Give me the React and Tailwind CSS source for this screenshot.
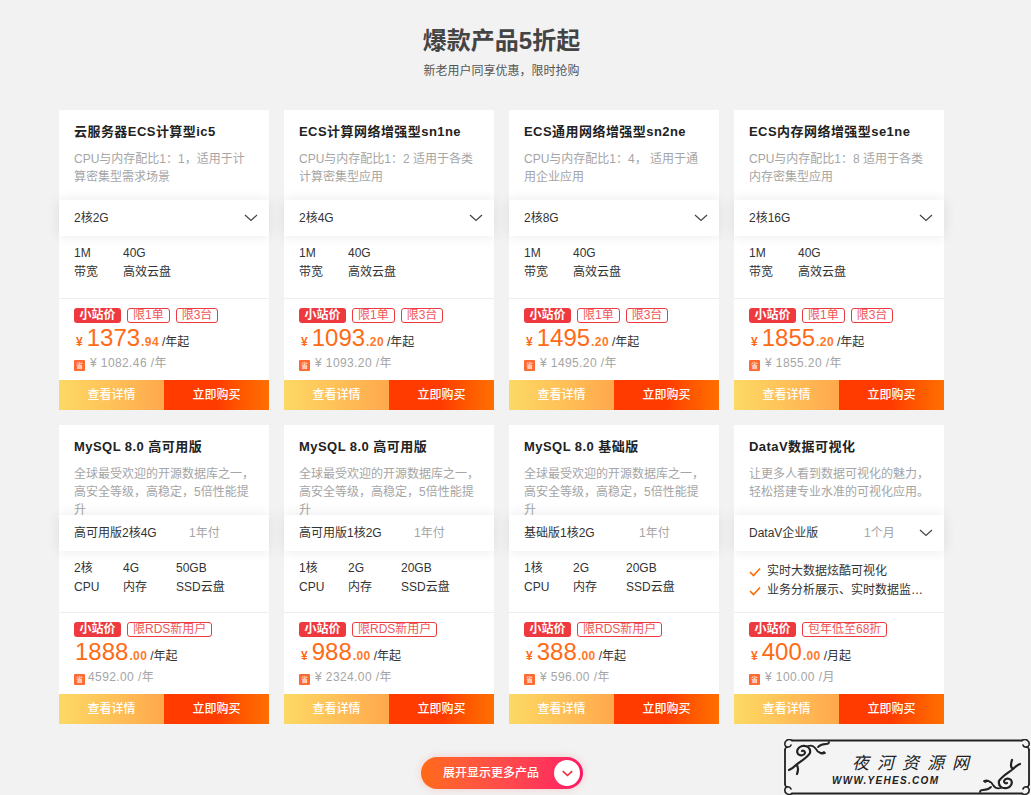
const font = { fontFamily: '"Liberation Sans","Noto Sans CJK SC",sans-serif' };

const Chevron = ({ className }) => (
  <svg viewBox="0 0 14 8" className={className} fill="none" stroke="currentColor" strokeWidth="1.2">
    <path d="M1 1l6 5.5L13 1" />
  </svg>
);

const Check = () => (
  <svg viewBox="0 0 12 10" className="w-[12px] h-[10px] shrink-0 text-[#ff6a00]" fill="none" stroke="currentColor" strokeWidth="1.6">
    <path d="M1 5l3.5 3.5L11 1.5" />
  </svg>
);

const cards = [
  { t: "云服务器ECS计算型ic5", d: "CPU与内存配比1：1，适用于计算密集型需求场景", sel: "2核2G", chev: true, specs: [["1M", "带宽"], ["40G", "高效云盘"]], tags: ["限1单", "限3台"], yen: true, p: "1373", c: ".94", u: "/年起", s: "¥ 1082.46 /年" },
  { t: "ECS计算网络增强型sn1ne", d: "CPU与内存配比1：2 适用于各类计算密集型应用", sel: "2核4G", chev: true, specs: [["1M", "带宽"], ["40G", "高效云盘"]], tags: ["限1单", "限3台"], yen: true, p: "1093", c: ".20", u: "/年起", s: "¥ 1093.20 /年" },
  { t: "ECS通用网络增强型sn2ne", d: "CPU与内存配比1：4， 适用于通用企业应用", sel: "2核8G", chev: true, specs: [["1M", "带宽"], ["40G", "高效云盘"]], tags: ["限1单", "限3台"], yen: true, p: "1495", c: ".20", u: "/年起", s: "¥ 1495.20 /年" },
  { t: "ECS内存网络增强型se1ne", d: "CPU与内存配比1：8 适用于各类内存密集型应用", sel: "2核16G", chev: true, specs: [["1M", "带宽"], ["40G", "高效云盘"]], tags: ["限1单", "限3台"], yen: true, p: "1855", c: ".20", u: "/年起", s: "¥ 1855.20 /年" },
  { t: "MySQL 8.0 高可用版", d: "全球最受欢迎的开源数据库之一，高安全等级，高稳定，5倍性能提升", sel: "高可用版2核4G", per: "1年付", specs: [["2核", "CPU"], ["4G", "内存"], ["50GB", "SSD云盘"]], tags: ["限RDS新用户"], yen: false, p: "1888", c: ".00", u: "/年起", s: "4592.00 /年" },
  { t: "MySQL 8.0 高可用版", d: "全球最受欢迎的开源数据库之一，高安全等级，高稳定，5倍性能提升", sel: "高可用版1核2G", per: "1年付", specs: [["1核", "CPU"], ["2G", "内存"], ["20GB", "SSD云盘"]], tags: ["限RDS新用户"], yen: true, p: "988", c: ".00", u: "/年起", s: "¥ 2324.00 /年" },
  { t: "MySQL 8.0 基础版", d: "全球最受欢迎的开源数据库之一，高安全等级，高稳定，5倍性能提升", sel: "基础版1核2G", per: "1年付", specs: [["1核", "CPU"], ["2G", "内存"], ["20GB", "SSD云盘"]], tags: ["限RDS新用户"], yen: true, p: "388", c: ".00", u: "/年起", s: "¥ 596.00 /年" },
  { t: "DataV数据可视化", d: "让更多人看到数据可视化的魅力，轻松搭建专业水准的可视化应用。", sel: "DataV企业版", per: "1个月", chev: true, checks: ["实时大数据炫酷可视化", "业务分析展示、实时数据监控大屏"], tags: ["包年低至68折"], yen: true, p: "400", c: ".00", u: "/月起", s: "¥ 100.00 /月" },
];

function Specs({ specs }) {
  const widths = ["w-[49px]", "w-[53px]", "w-auto"];
  return (
    <div className="flex px-[15px] pt-[8px] text-[12px] leading-[19px] text-[#333]">
      {specs.map((s, i) => (
        <div key={i} className={widths[i]}>
          <div>{s[0]}</div>
          <div>{s[1]}</div>
        </div>
      ))}
    </div>
  );
}

function Checks({ items }) {
  return (
    <div className="px-[15px] pt-[11px] text-[12px] leading-[19px] text-[#333]">
      {items.map((t) => (
        <div key={t} className="flex items-center gap-[6px]">
          <Check />
          <span className="truncate">{t}</span>
        </div>
      ))}
    </div>
  );
}

function Card({ c, top }) {
  return (
    <div className={`flex flex-col bg-white ${top ? "h-[300px]" : "h-[299px]"}`}>
      <div className="h-[90px] shrink-0 px-[15px] pt-[14px]">
        <div className="text-[13px] leading-[16px] font-bold text-[#222] tracking-[0.45px] whitespace-nowrap">{c.t}</div>
        <div className="mt-[10px] text-[12px] leading-[18px] text-[#a5a5a5]">{c.d}</div>
      </div>
      <div className="relative h-9 shrink-0 flex items-center bg-white pl-[15px] pr-[11px] text-[12px] text-[#333] shadow-[0_0_14px_rgba(0,0,0,0.09)]">
        <span className="w-[115px] whitespace-nowrap">{c.sel}</span>
        {c.per && <span className="text-[#a5a5a5] whitespace-nowrap">{c.per}</span>}
        {c.chev && <Chevron className="ml-auto w-[14px] h-[8px] text-[#444]" />}
      </div>
      <div className={`shrink-0 border-b border-[#eeeeee] ${top ? "h-[63px]" : "h-[62px]"}`}>
        {c.checks ? <Checks items={c.checks} /> : <Specs specs={c.specs} />}
      </div>
      <div className="flex-1 px-[15px] pt-[9px] min-h-0">
        <div className="flex gap-[6px]">
          <span className="h-[15px] w-[47px] text-center rounded-[3px] bg-[#ee3a3f] text-white text-[12px] leading-[15px] font-bold whitespace-nowrap">小站价</span>
          {c.tags.map((t) => (
            <span key={t} className="h-[15px] px-[5px] rounded-[3px] border border-[#ee3a3f] text-[#f0565a] text-[12px] leading-[13px] whitespace-nowrap">{t}</span>
          ))}
        </div>
        <div className="flex items-baseline h-[30px] leading-[30px] whitespace-nowrap">
          {c.yen && <span className="text-[#ff6a14] text-[12px] font-bold ml-[2px] mr-[4px]">¥</span>}
          <span className={`text-[#ff6a14] text-[24px] ${c.yen ? "" : "ml-[1px]"}`}>{c.p}</span>
          <span className="text-[#ff7a2a] text-[12px] font-bold tracking-[0.4px] ml-[1px]">{c.c}</span>
          <span className="text-[#333] text-[12px] ml-[3px]">{c.u}</span>
        </div>
        <div className="flex items-center h-[17px] mt-[1px] whitespace-nowrap">
          <span className="w-[11px] h-[11px] mt-[5px] rounded-[1px] bg-[#ff6a33] text-white text-[7px] leading-[11px] text-center mr-[5px]">省</span>
          <span className={`text-[12px] text-[#a5a5a5] tracking-[0.4px] ${c.yen ? "" : "-ml-[2px]"}`}>{c.s}</span>
        </div>
      </div>
      <div className="flex h-[30px] shrink-0 text-white text-[12px] font-medium leading-[30px] text-center">
        <div className="w-[105px] bg-gradient-to-r from-[#fcd964] to-[#ffa84c]">查看详情</div>
        <div className="w-[105px] bg-gradient-to-r from-[#ff3b00] via-[#ff3b00] to-[#ff6f00]">立即购买</div>
      </div>
    </div>
  );
}

function Watermark() {
  return (
    <div className="absolute right-0 bottom-0 w-[248px] h-[56px] bg-[#f4f4f4] overflow-hidden">
      <svg viewBox="0 0 248 56" className="absolute inset-0 w-full h-full text-[#222]" fill="none" stroke="currentColor" strokeLinecap="round">
        <path d="M9 1.5H239M9 54.5H239M2 11V45M246 11V45" strokeWidth="1.8" />
        <path d="M9 1.5C5 -1 1 2 2 6c1 3 5 3 6 0M2 11c0-2 1-3 3-3" strokeWidth="1.6" />
        <path d="M239 1.5c4-2.500 8 .5 7 4.500-1 3-5 3-6 0M246 11c0-2-1-3-3-3" strokeWidth="1.6" />
        <path d="M9 54.500c-4 2.500-8-.5-7-4.500 1-3 5-3 6 0M2 45c0 2 1 3 3 3" strokeWidth="1.600" />
        <path d="M239 54.500c4 2.500 8-.5 7-4.500-1-3-5-3-6 0M246 45c0 2-1 3-3 3" strokeWidth="1.600" />
        <path d="M6 31c3-1 5-3 7-5 2 1 3 3 1 9M13 26c5-4 11-7 14-12 1-5-3-8-8-7-4 1-6 5-4 8 2 2 6 2 7-1 0-2-2-3-3-2" strokeWidth="2.200" />
        <path d="M25 7c3-1 6 0 8 3 2 4 5 5 8 3M36 13c2 2 4 2 6 1M35 8c2-2 5-3 8-3 2 0 3-1 3-2" strokeWidth="1.800" />
        <path d="M237 25c-3 1-5 3-7 5-2-1-3-3-1-9M230 30c-5 4-11 7-14 12-1 5 3 8 8 7 4-1 6-5 4-8-2-2-6-2-7 1 0 2 2 3 3 2" strokeWidth="2.200" />
        <path d="M218 49c-3 1-6 0-8-3-2-4-5-5-8-3M207 43c-2-2-4-2-6-1M208 48c-2 2-5 3-8 3-2 0-3 1-3 2" strokeWidth="1.800" />
      </svg>
      <div className="absolute left-[69px] top-[13px] text-[17px] leading-[20px] text-[#222] italic whitespace-nowrap tracking-[8px]" style={{ fontFamily: '"Noto Sans CJK SC",serif' }}>夜河资源网</div>
      <div className="absolute left-[49px] top-[36px] text-[10px] leading-[12px] font-bold italic text-[#222] whitespace-nowrap tracking-[1.3px]" style={{ fontFamily: '"Liberation Sans",sans-serif' }}>WWW.YEHES.COM</div>
    </div>
  );
}

export default function App() {
  return (
    <div className="relative h-[795px] w-[1031px] overflow-hidden bg-[#f2f2f2]" style={font}>
      <div className="pt-[24px] w-[1003px] text-center">
        <h1 className="text-[24px] leading-[34px] font-bold text-[#444]">爆款产品5折起</h1>
        <p className="mt-[4px] text-[12px] leading-[18px] text-[#555]">新老用户同享优惠，限时抢购</p>
      </div>
      <div className="mt-[30px] ml-[59px] grid grid-cols-[repeat(4,210px)] gap-[15px]">
        {cards.map((c, i) => (
          <Card key={i} c={c} top={i < 4} />
        ))}
      </div>
      <div className="mt-[33px] ml-[421px] flex h-[32px] w-[162px] items-center justify-between rounded-full bg-gradient-to-r from-[#ff6a14] to-[#ff1464] pl-[22px] pr-[3px] text-[12px] font-medium text-white shadow-[0_0_8px_rgba(255,60,60,0.2)]">
        <span>展开显示更多产品</span>
        <span className="flex h-[26px] w-[26px] items-center justify-center rounded-full bg-white">
          <Chevron className="w-[11px] h-[7px] text-[#ee2a3a] [stroke-width:2]" />
        </span>
      </div>
      <Watermark />
    </div>
  );
}
